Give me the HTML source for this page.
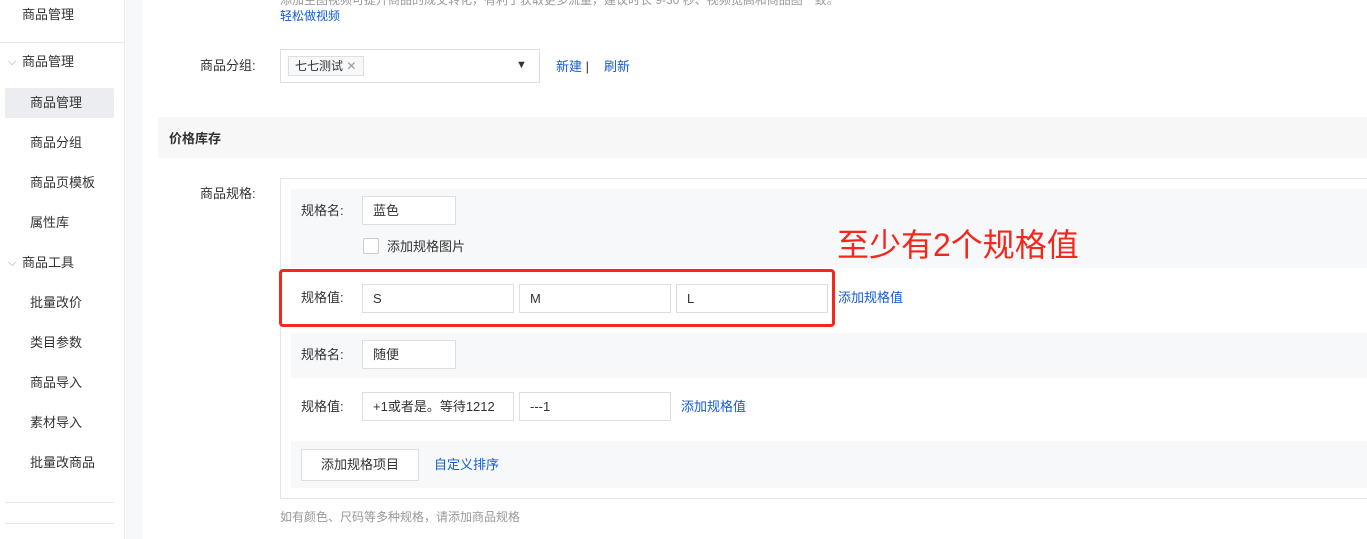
<!DOCTYPE html>
<html><head><meta charset="utf-8"><style>
*{margin:0;padding:0;box-sizing:border-box}
body{width:1367px;height:539px;overflow:hidden;background:#fff;font-family:"Liberation Sans","Noto Sans CJK SC",sans-serif;font-size:13px;color:#333;position:relative}
.a{position:absolute;white-space:nowrap}
.side{position:absolute;left:0;top:0;width:125px;height:539px;background:#fff;border-right:1px solid #e8e8e8}
.gap{position:absolute;left:126px;top:0;width:17px;height:539px;background:#f7f8fa}
.si{position:absolute;left:30px;font-size:13px;color:#333;line-height:16px}
.hl{position:absolute;left:5px;width:109px;height:1px;background:#e8e8e8}
.inp{position:absolute;height:29px;border:1px solid #dcdee0;background:#fff;padding-left:10px;line-height:27px;font-size:13px;color:#333}
.lk{color:#155bd4}
.grey{position:absolute;left:291px;right:0;background:#f7f8fa}
.lbl{position:absolute;left:301px;font-size:13px;color:#333}
</style></head><body>
<div class="side">
<div class="si" style="left:22px;top:7px">商品管理</div>
<div class="hl" style="left:0;width:125px;top:42px"></div>
<div class="si" style="left:8px;top:54px;color:#999;font-size:11px">⌵</div>
<div class="si" style="left:22px;top:54px">商品管理</div>
<div style="position:absolute;left:5px;top:88px;width:109px;height:30px;background:#ebedf0;border-radius:2px"></div>
<div class="si" style="top:95px">商品管理</div>
<div class="si" style="top:135px">商品分组</div>
<div class="si" style="top:175px">商品页模板</div>
<div class="si" style="top:215px">属性库</div>
<div class="si" style="left:8px;top:255px;color:#999;font-size:11px">⌵</div>
<div class="si" style="left:22px;top:255px">商品工具</div>
<div class="si" style="top:295px">批量改价</div>
<div class="si" style="top:335px">类目参数</div>
<div class="si" style="top:375px">商品导入</div>
<div class="si" style="top:415px">素材导入</div>
<div class="si" style="top:455px">批量改商品</div>
<div class="hl" style="top:502px"></div>
<div class="hl" style="top:523px"></div>
</div>
<div class="gap"></div>

<div class="a" style="left:280px;top:-9px;font-size:12px;color:#999">添加主图视频可提升商品的成交转化，有利于获取更多流量，建议时长 9-30 秒、视频宽高和商品图一致。</div>
<div class="a lk" style="left:280px;top:7px;font-size:12px">轻松做视频</div>

<div class="a" style="left:200px;top:55px;color:#333">商品分组:</div>
<div class="a" style="left:280px;top:49px;width:260px;height:34px;border:1px solid #dcdee0"></div>
<div class="a" style="left:288px;top:56px;width:76px;height:20px;border:1px solid #dcdee0;background:#f7f8fa;font-size:12px;line-height:18px;padding-left:6px">七七测试 <span style="color:#999">✕</span></div>
<div class="a" style="left:516px;top:59px;font-size:11px;color:#333">▼</div>
<div class="a lk" style="left:556px;top:56px">新建 <span style="color:#333">|</span></div>
<div class="a lk" style="left:604px;top:56px">刷新</div>

<div class="a" style="left:158px;top:117px;right:0;height:41px;background:#f7f7f7"></div>
<div class="a" style="left:169px;top:128px;font-weight:bold;color:#333">价格库存</div>

<div class="a" style="left:200px;top:183px">商品规格:</div>
<div class="a" style="left:280px;top:178px;width:1090px;height:321px;border:1px solid #e5e5e5"></div>
<div class="grey" style="top:189px;height:79px"></div>
<div class="lbl" style="top:200px">规格名:</div>
<div class="inp" style="left:362px;top:196px;width:94px">蓝色</div>
<div class="a" style="left:363px;top:238px;width:16px;height:16px;border:1px solid #ccc;background:#fff;border-radius:2px"></div>
<div class="a" style="left:387px;top:236px">添加规格图片</div>

<div class="lbl" style="top:287px">规格值:</div>
<div class="inp" style="left:362px;top:284px;width:152px">S</div>
<div class="inp" style="left:519px;top:284px;width:152px">M</div>
<div class="inp" style="left:676px;top:284px;width:152px">L</div>
<div class="a" style="left:279px;top:269px;width:556px;height:58px;border:3px solid #f5271d;border-radius:4px"></div>
<div class="a lk" style="left:838px;top:287px">添加规格值</div>
<div class="a" style="left:837px;top:227px;font-size:32px;color:#f5271d;line-height:36px">至少有2个规格值</div>

<div class="grey" style="top:333px;height:45px"></div>
<div class="lbl" style="top:344px">规格名:</div>
<div class="inp" style="left:362px;top:340px;width:94px">随便</div>
<div class="lbl" style="top:396px">规格值:</div>
<div class="inp" style="left:362px;top:392px;width:152px">+1或者是。等待1212</div>
<div class="inp" style="left:519px;top:392px;width:152px">---1</div>
<div class="a lk" style="left:681px;top:396px">添加规格值</div>

<div class="grey" style="top:441px;height:47px"></div>
<div class="a" style="left:301px;top:449px;width:118px;height:32px;border:1px solid #dcdee0;background:#fff;text-align:center;line-height:30px">添加规格项目</div>
<div class="a lk" style="left:434px;top:454px">自定义排序</div>

<div class="a" style="left:280px;top:508px;font-size:12px;color:#999">如有颜色、尺码等多种规格，请添加商品规格</div>
</body></html>
